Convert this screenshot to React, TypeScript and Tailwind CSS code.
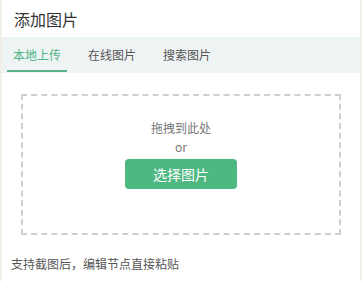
export default function App() {
  return (
    <div
      className="w-[362px] h-[281px] bg-white border-x-2 border-[#f1f0e8] text-[#333] overflow-hidden"
      style={{ fontFamily: '"Noto Sans CJK SC", "Noto Sans", sans-serif' }}
    >
      <div className="h-[37px] pl-3 flex items-center text-[16px] text-[#333]">添加图片</div>

      {/* Tabs */}
      <div className="h-[36px] bg-[#eef3f4] flex pl-[5px]">
        <div className="relative w-[60px] flex items-center justify-center text-[12px] text-[#4fb482]">
          本地上传
          <span className="absolute left-0 right-0 bottom-[1px] h-[2px] bg-[#5cb38a]" />
        </div>
        <div className="ml-[15px] w-[60px] flex items-center justify-center text-[12px] text-[#555]">在线图片</div>
        <div className="ml-[15px] w-[60px] flex items-center justify-center text-[12px] text-[#555]">搜索图片</div>
      </div>

      {/* Drop zone */}
      <div className="px-[19px] pt-[21px]">
        <div className="h-[141px] border-2 border-dashed border-[#cfcfcf] flex flex-col items-center pt-[23px]">
          <div className="text-[12px] leading-[18px] text-[#777]">拖拽到此处</div>
          <div className="text-[12px] leading-[18px] text-[#777] mt-[1px]">or</div>
          <button className="mt-[3px] w-[112px] h-[30px] rounded-[4px] bg-[#4eb882] text-white text-[14px]">
            选择图片
          </button>
        </div>
      </div>

      <div className="pl-[9px] pt-[20px] text-[12px] leading-[18px] text-[#555]">支持截图后，编辑节点直接粘贴</div>
    </div>
  )
}
